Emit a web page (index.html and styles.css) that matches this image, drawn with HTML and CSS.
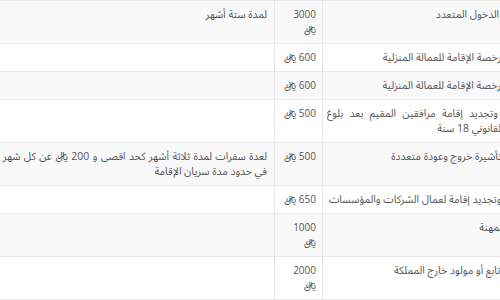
FILE: index.html
```html
<!DOCTYPE html>
<html lang="ar" dir="rtl">
<head>
<meta charset="utf-8">
<link rel="stylesheet" href="styles.css">
</head>
<body>
<div class="viewport">
  <table class="fees">
    <colgroup>
      <col class="col-name">
      <col class="col-price">
      <col class="col-note">
    </colgroup>
    <tbody>
      <tr>
        <td class="name">تأشيرة الدخول المتعدد</td>
        <td class="price">3000 ﷼</td>
        <td>لمدة ستة أشهر</td>
      </tr>
      <tr>
        <td class="name">إصدار رخصة الإقامة للعمالة المنزلية</td>
        <td class="price">600 ﷼</td>
        <td></td>
      </tr>
      <tr>
        <td class="name">تجديد رخصة الإقامة للعمالة المنزلية</td>
        <td class="price">600 ﷼</td>
        <td></td>
      </tr>
      <tr>
        <td class="name">إصدار وتجديد إقامة مرافقين المقيم بعد بلوغ السن القانوني 18 سنة</td>
        <td class="price">500 ﷼</td>
        <td></td>
      </tr>
      <tr>
        <td class="name">إصدار تأشيرة خروج وعودة متعددة</td>
        <td class="price">500 ﷼</td>
        <td>لعدة سفرات لمدة ثلاثة أشهر كحد اقصى و 200 ﷼ عن كل شهر إضافي في حدود مدة سريان الإقامة</td>
      </tr>
      <tr>
        <td class="name">إصدار وتجديد إقامة لعمال الشركات والمؤسسات</td>
        <td class="price">650 ﷼</td>
        <td></td>
      </tr>
      <tr>
        <td class="name">تغيير المهنة</td>
        <td class="price">1000 ﷼</td>
        <td></td>
      </tr>
      <tr>
        <td class="name">إضافة تابع أو مولود خارج المملكة</td>
        <td class="price">2000 ﷼</td>
        <td></td>
      </tr>
    </tbody>
  </table>
</div>
</body>
</html>
```
FILE: styles.css
```css
html, body {
  margin: 0;
  padding: 0;
  background: #fff;
}

.viewport {
  width: 500px;
  height: 300px;
  overflow: hidden;
  direction: rtl;
}

.fees {
  border-collapse: collapse;
  table-layout: fixed;
  width: 580px;
  margin-right: -45px;
  font-family: "Open Sans", "Noto Sans Arabic", "Noto Naskh Arabic", "DejaVu Sans", sans-serif;
  font-size: 10.5px;
  line-height: 15px;
  color: #555;
}

.col-name { width: 222px; }
.col-price { width: 48px; }
.col-note { width: 310px; }

.fees td {
  border: 1px solid #e8e8e8;
  padding: 6px 7px;
  vertical-align: top;
  text-align: justify;
}

.fees td.name {
  padding-right: 16px;
  padding-left: 4px;
}

.fees td.price {
  padding-right: 6px;
  padding-left: 8px;
  font-size: 10px;
  text-align: right;
}

.fees tr:nth-child(odd) td {
  background: #f9f9f9;
}
```
